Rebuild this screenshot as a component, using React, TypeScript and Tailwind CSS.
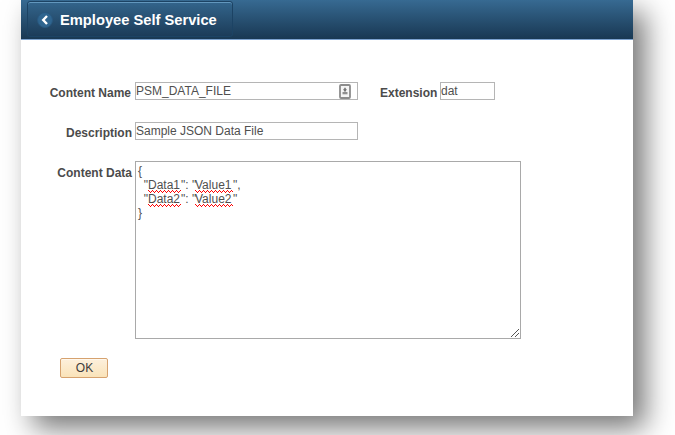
import type { ReactNode } from 'react';

function Label({ children, className }: { children: ReactNode; className: string }) {
  return (
    <label className={`shrink-0 whitespace-nowrap text-right font-bold leading-[14px] text-[#4b4b4b] ${className}`}>
      {children}
    </label>
  );
}

function Field({ value, className, children }: { value: string; className: string; children?: ReactNode }) {
  return (
    <div className={`flex h-[18px] shrink-0 justify-between border border-[#b5b5b5] bg-white leading-4 ${className}`}>
      <span className="whitespace-nowrap">{value}</span>
      {children}
    </div>
  );
}

function ContactIcon() {
  return (
    <svg width="12" height="15" viewBox="0 0 12 15" className="mt-px mr-[6px]">
      <rect x="1" y="1" width="10" height="13" rx="1" fill="#f5f5f5" stroke="#8c8c8c" strokeWidth="1.8" />
      <path d="M6 3.2 L7.4 5.2 L7 7.4 H5 L4.6 5.2Z" fill="#777" />
      <rect x="3.5" y="8" width="5" height="2.3" fill="#8f8f8f" />
    </svg>
  );
}

function Squiggle({ children, width, className }: { children: ReactNode; width: number; className: string }) {
  const dots = Array.from({ length: width }, (_, x) => `M${x} ${[0, 1, 2, 1][x % 4]}h1v1h-1z`).join('');
  return (
    <span className={`relative ${className}`}>
      {children}
      <svg width={width} height="3" className="absolute bottom-[-1px] left-0" shapeRendering="crispEdges">
        <path d={dots} fill="#ff0000" />
      </svg>
    </span>
  );
}

function JsonLine({ name, value, end }: { name: string; value: string; end: string }) {
  return (
    <div className="-ml-px flex">
      <span className="w-[11px]">{'  "'}</span>
      <Squiggle width={33} className="w-[33px]">{name}</Squiggle>
      <span className="w-[14px]">{'": "'}</span>
      <Squiggle width={38} className="w-[38px]">{value}</Squiggle>
      <span>{end}</span>
    </div>
  );
}

export default function App() {
  return (
    <div className="h-[435px] w-[675px] overflow-hidden bg-white pl-[21px] font-['Liberation_Sans',Arial,sans-serif] text-[12px] text-[#4f4f4f]">
      <div className="h-[416px] w-[612px] bg-white shadow-[12px_12px_27px_rgba(0,0,0,0.54)]">
        <header className="h-10 border-b border-[#7da3d0] bg-linear-to-b from-[#376a92] to-[#193853] pt-px pl-[6px]">
          <div className="flex h-9 w-[206px] items-center rounded-[3px] border border-[#1c4364] bg-linear-to-b from-[#33658c] to-[#1c3c59] pl-[9px] shadow-[inset_0_1px_0_#6297bd]">
            <svg width="16" height="16" viewBox="0 0 16 16" className="mt-[2px]">
              <circle cx="8" cy="8" r="7.5" fill="#2f658f" stroke="#29587f" />
              <path d="M10 4 L6.2 8 L10 12" fill="none" stroke="white" strokeWidth="2.4" />
            </svg>
            <span className="mt-[2px] ml-[7px] whitespace-nowrap text-[14.7px] font-bold text-white">Employee Self Service</span>
          </div>
        </header>
        <main className="pt-[42px]">
          <div className="flex">
            <Label className="w-[110px] pt-1">Content Name</Label>
            <Field value="PSM_DATA_FILE" className="ml-[4px] w-[223px]">
              <ContactIcon />
            </Field>
            <Label className="ml-[22px] w-[57px] pt-1">Extension</Label>
            <Field value="dat" className="ml-[3px] w-[55px]" />
          </div>
          <div className="mt-[22px] flex">
            <Label className="w-[111px] pt-1">Description</Label>
            <Field value="Sample JSON Data File" className="ml-[3px] w-[223px]" />
          </div>
          <div className="mt-[21px] flex">
            <Label className="w-[111px] pt-[5px]">Content Data</Label>
            <div className="ml-[3px] flex h-[178px] w-[386px] flex-col justify-between border border-[#a9a9a9] pt-[2px] pl-[2px]">
              <div className="whitespace-pre leading-[14px]">
                <div>{'{'}</div>
                <JsonLine name="Data1" value="Value1" end={'",'} />
                <JsonLine name="Data2" value="Value2" end={'"'} />
                <div>{'}'}</div>
              </div>
              <svg width="8" height="8" viewBox="0 0 8 8" className="mr-px mb-px self-end" shapeRendering="crispEdges">
                <path d="M0 7h1v1h-1zM1 6h1v1h-1zM2 5h1v1h-1zM3 4h1v1h-1zM4 3h1v1h-1zM5 2h1v1h-1zM6 1h1v1h-1zM7 0h1v1h-1zM4 7h1v1h-1zM5 6h1v1h-1zM6 5h1v1h-1zM7 4h1v1h-1z" fill="#555" />
              </svg>
            </div>
          </div>
          <button className="mt-[19px] ml-[39px] block h-5 w-12 rounded-[2px] border border-[#d6a26f] bg-linear-to-b from-[#fdf0dc] to-[#fae3b9] pl-px leading-[18px] text-[#3c3c3c] shadow-[inset_0_1px_0_#fff8ed]">
            OK
          </button>
        </main>
      </div>
    </div>
  );
}
